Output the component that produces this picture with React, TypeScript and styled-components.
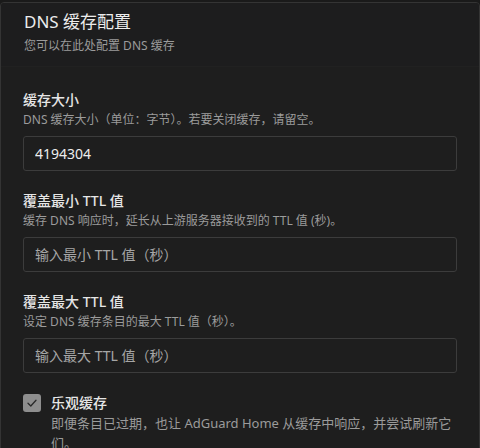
import styled, { createGlobalStyle } from "styled-components";

const GlobalStyle = createGlobalStyle`
  html, body {
    margin: 0;
    padding: 0;
    background: #1a1a1a;
  }
  body {
    font-family: "Noto Sans", "Noto Sans CJK SC", sans-serif;
  }
`;

const fields = [
  {
    label: "缓存大小",
    hint: "DNS 缓存大小（单位：字节）。若要关闭缓存，请留空。",
    value: "4194304",
    placeholder: "",
  },
  {
    label: "覆盖最小 TTL 值",
    hint: "缓存 DNS 响应时，延长从上游服务器接收到的 TTL 值 (秒)。",
    value: "",
    placeholder: "输入最小 TTL 值（秒）",
  },
  {
    label: "覆盖最大 TTL 值",
    hint: "设定 DNS 缓存条目的最大 TTL 值（秒）。",
    value: "",
    placeholder: "输入最大 TTL 值（秒）",
  },
];

export default function App() {
  return (
    <>
      <GlobalStyle />
      <StyledCard>
        <StyledCardHeader>
          <StyledTitle>DNS 缓存配置</StyledTitle>
          <StyledSubtitle>您可以在此处配置 DNS 缓存</StyledSubtitle>
        </StyledCardHeader>

        <StyledCardBody>
          {fields.map((field) => (
            <StyledField key={field.label}>
              <StyledLabel>{field.label}</StyledLabel>
              <StyledHint>{field.hint}</StyledHint>
              <StyledInput type="text" defaultValue={field.value} placeholder={field.placeholder} />
            </StyledField>
          ))}

          <StyledCheckRow>
            <StyledCheckbox>
              <svg width="12" height="12" viewBox="0 0 12 12" fill="none">
                <path d="M2 6.3 L4.8 9 L10 3.2" stroke="#2a2a2a" strokeWidth="1.3" strokeLinecap="round" strokeLinejoin="round" />
              </svg>
            </StyledCheckbox>
            <div>
              <StyledCheckLabel>乐观缓存</StyledCheckLabel>
              <StyledCheckHint>即便条目已过期，也让 AdGuard Home 从缓存中响应，并尝试刷新它们。</StyledCheckHint>
            </div>
          </StyledCheckRow>
        </StyledCardBody>
      </StyledCard>
    </>
  );
}

const StyledCard = styled.div`
  margin-top: 2px;
  width: 480px;
  box-sizing: border-box;
  background: #1e1e1e;
  border: 1px solid #343434;
  border-radius: 4px;
  height: 460px;
  overflow: hidden;
`;

const StyledCardHeader = styled.div`
  padding: 7px 23px 10px;
  border-bottom: 1px solid #212121;
  background: #1d1d1e;
`;

const StyledTitle = styled.h1`
  margin: 0;
  font-size: 17px;
  line-height: 24px;
  font-weight: 400;
  color: #ececec;
`;

const StyledSubtitle = styled.p`
  margin: 2px 0 0;
  font-size: 12px;
  line-height: 20px;
  color: #9b9b9b;
`;

const StyledCardBody = styled.div`
  padding: 23px 22px 0 22px;
  display: flex;
  flex-direction: column;
  row-gap: 20px;
`;

const StyledField = styled.div`
  display: flex;
  flex-direction: column;
`;

const StyledLabel = styled.div`
  font-size: 14px;
  line-height: 20px;
  font-weight: 500;
  color: #e6e6e6;
`;

const StyledHint = styled.div`
  font-size: 12px;
  line-height: 20px;
  color: #9b9b9b;
`;

const StyledInput = styled.input`
  margin-top: 6px;
  height: 35px;
  box-sizing: border-box;
  width: 100%;
  padding: 0 11px;
  background: #1e1e1e;
  border: 1px solid #3c3c3c;
  border-radius: 3px;
  color: #ededed;
  font-family: inherit;
  font-size: 14px;
  outline: none;

  &::placeholder {
    color: #a6a6a6;
  }
`;

const StyledCheckRow = styled.div`
  display: flex;
  column-gap: 10px;
  align-items: flex-start;
`;

const StyledCheckbox = styled.div`
  margin-top: 1px;
  flex-shrink: 0;
  width: 18px;
  height: 18px;
  border-radius: 3px;
  background: #8e8e8e;
  display: flex;
  align-items: center;
  justify-content: center;
`;

const StyledCheckLabel = styled.div`
  font-size: 14px;
  line-height: 20px;
  font-weight: 500;
  color: #e6e6e6;
`;

const StyledCheckHint = styled.div`
  font-size: 13px;
  line-height: 20px;
  color: #9b9b9b;
`;
